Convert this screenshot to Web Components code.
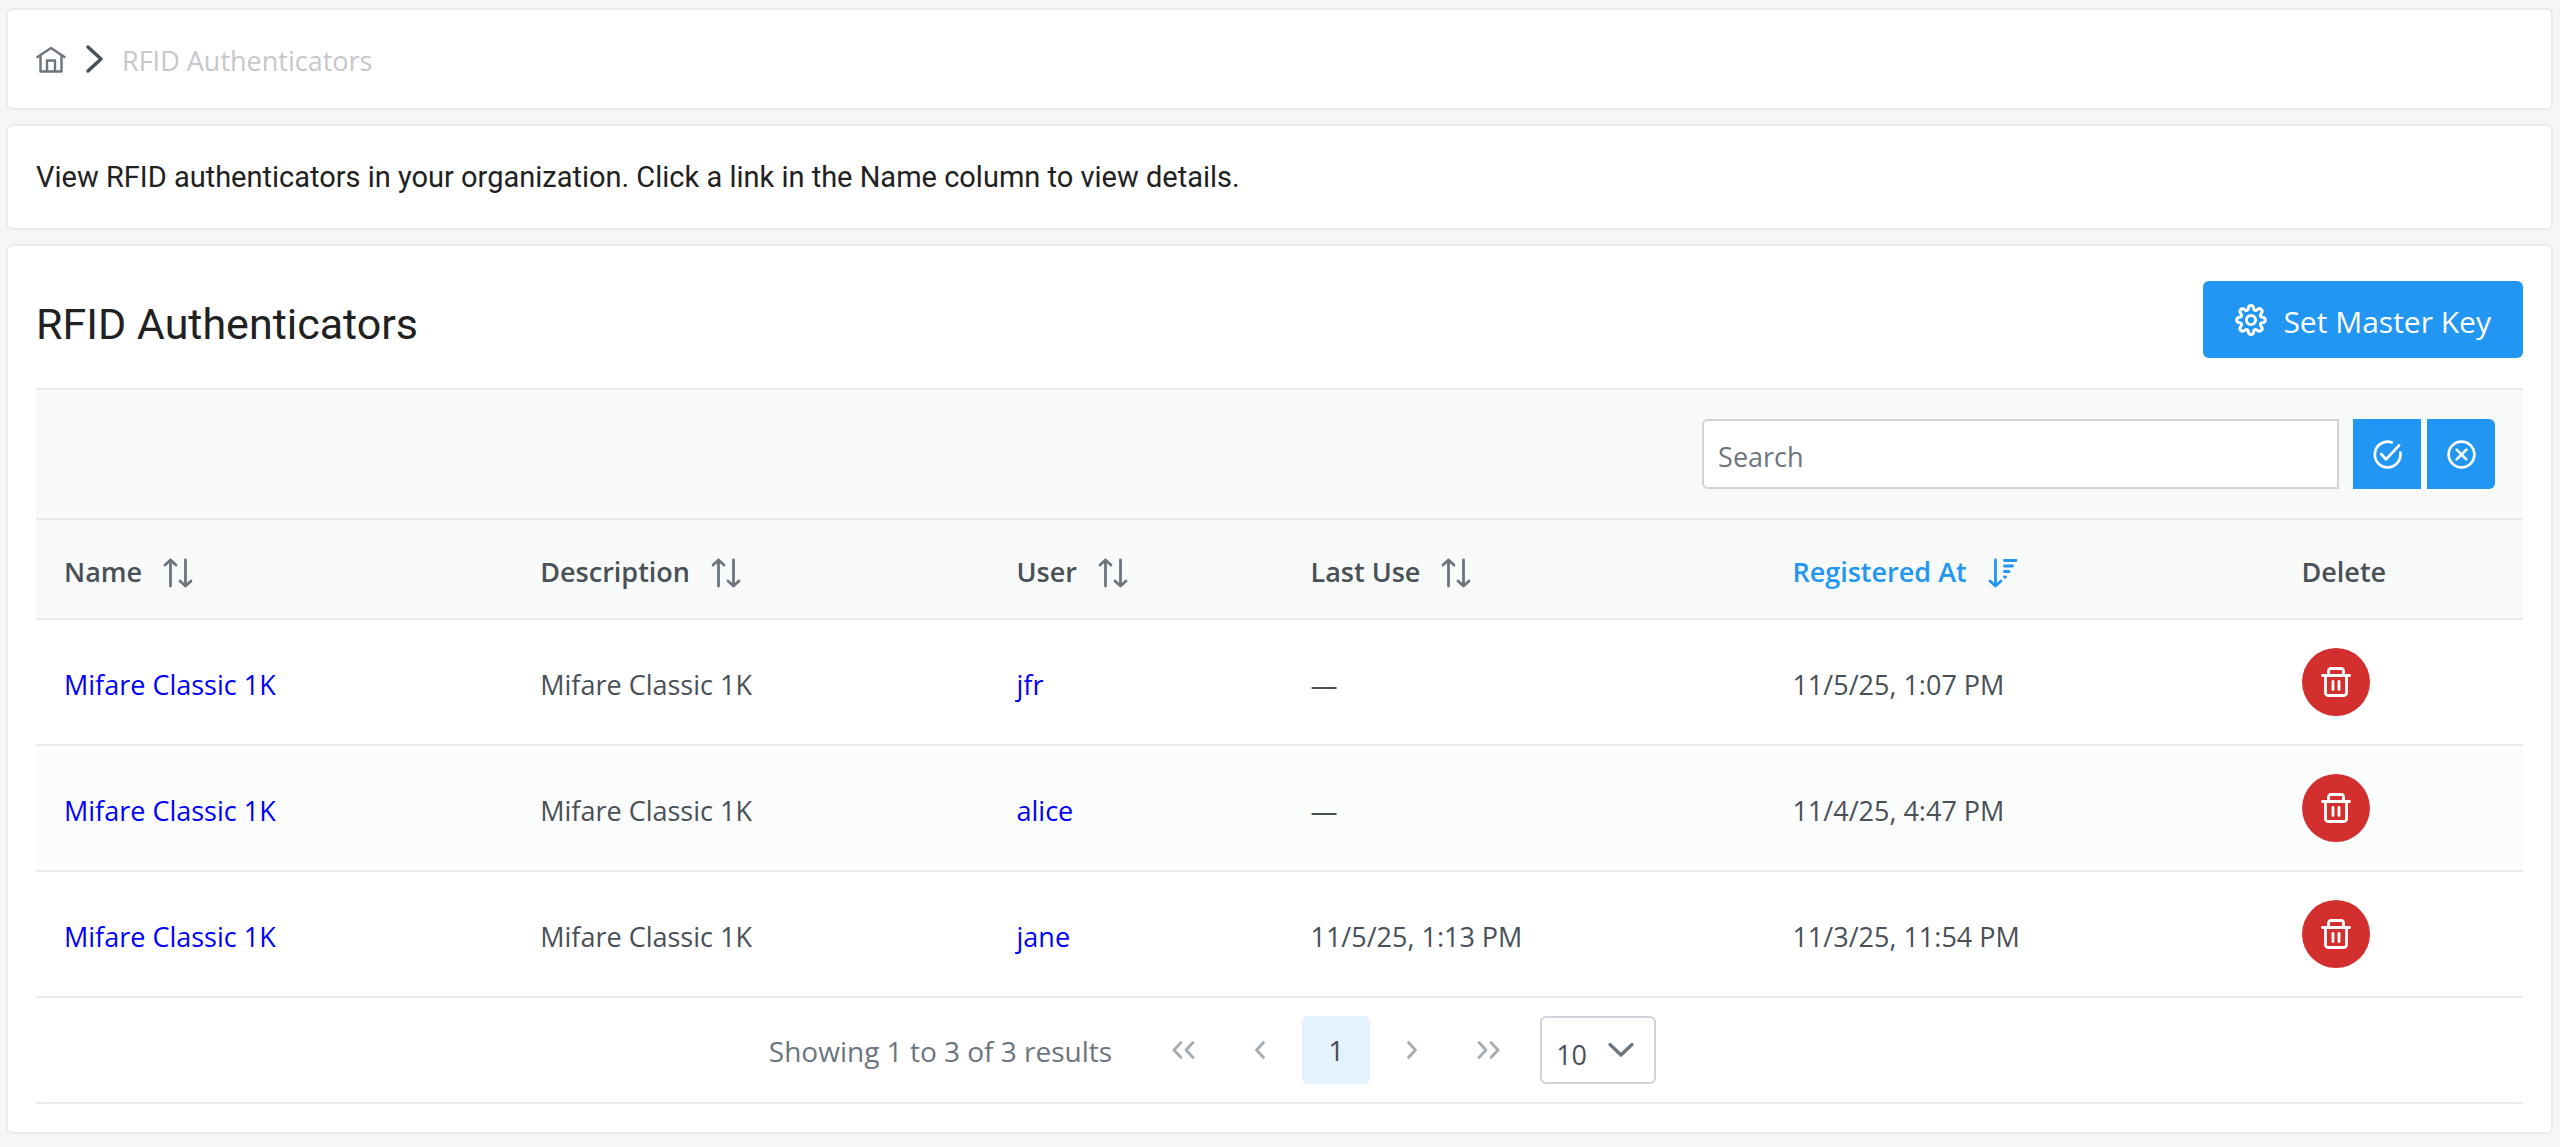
<!DOCTYPE html>
<html lang="en">
<head>
  <meta charset="utf-8">
  <meta name="viewport" content="width=device-width, initial-scale=1">
  <title>RFID Authenticators</title>
  <style>
    body {
      margin: 0;
      background-color: #f6f6f6;
      font-family: "Open Sans", "Noto Sans", sans-serif;
      font-size: 27px;
      color: #495057;
    }
  </style>
</head>
<body>
  <authenticators-page></authenticators-page>

  <script>
    const icons = {
      home: '<path stroke-width="2.4" d="M1.5 13 15 4l13.5 9M4.500 11.500V27.500h21V11.500M11 27V16.500h8V27"/>',
      chevron: '<path stroke-width="3.5" d="M9 3l13 12L9 27"/>',
      cog: '<circle cx="15" cy="15" r="4.3"/><path d="M12.6 3.2a2.5 2.5 0 0 1 4.8 0l.3 1.6a1.6 1.6 0 0 0 2.4 1l1.3-.9a2.5 2.5 0 0 1 3.5 3.5l-.9 1.4a1.6 1.6 0 0 0 1 2.4l1.6.4a2.5 2.5 0 0 1 0 4.8l-1.6.3a1.6 1.6 0 0 0-1 2.4l.9 1.4a2.5 2.5 0 0 1-3.5 3.5l-1.3-.9a1.6 1.6 0 0 0-2.4 1l-.3 1.6a2.5 2.5 0 0 1-4.8 0l-.3-1.6a1.6 1.6 0 0 0-2.4-1l-1.3.9a2.5 2.5 0 0 1-3.5-3.5l.9-1.4a1.6 1.6 0 0 0-1-2.4l-1.6-.3a2.5 2.5 0 0 1 0-4.8l1.6-.4a1.6 1.6 0 0 0 1-2.4l-.9-1.4a2.5 2.5 0 0 1 3.5-3.5l1.3.9a1.6 1.6 0 0 0 2.4-1z"/>',
      check: '<path d="M19.500 2.500A13.300 13.300 0 1 0 28.300 13M8.500 14.500l5 5.500L27 5.500"/>',
      times: '<circle cx="15" cy="15" r="13.300"/><path d="M10 10l10 10M20 10 10 20"/>',
      trash: '<path d="M1.500 8.500h27M4.500 8.500v17.500a2.500 2.500 0 0 0 2.500 2.500h16a2.500 2.500 0 0 0 2.500-2.500V8.500M7.500 8V4a2.500 2.500 0 0 1 2.500-2.500h10a2.500 2.500 0 0 1 2.500 2.500v4M12 14.500v8M18 14.500v8"/>',
      sort: '<path d="M7.500 28V2M2 7l5.500-5L13 7M22.500 2v26M17 23l5.500 5 5.500-5"/>',
      'sort-down': '<path d="M7.500 2v26M2 23l5.500 5 5.500-5M16.500 2.500h11.500M16.500 8h8M16.500 13.500h4.500M16.500 19h1"/>',
      first: '<path d="M12 7.500 5 15l7 7.500M24 7.500 17 15l7 7.500"/>',
      previous: '<path d="M18.500 7.500l-7 7.500 7 7.500"/>',
      next: '<path d="M11.500 7.500l7 7.500-7 7.500"/>',
      last: '<path d="M6 7.500l7 7.500-7 7.500M18 7.500l7 7.500-7 7.500"/>',
      down: '<path stroke-width="3.2" d="M4 9.500 15 20 26 9.500"/>'
    };

    class UiIcon extends HTMLElement {
      connectedCallback() {
        this.attachShadow({ mode: 'open' }).innerHTML = `
          <style>
            :host {
              display: inline-block;
              flex: none;
              width: var(--icon-size, 30px);
              height: var(--icon-size, 30px);
            }

            svg {
              display: block;
              width: 100%;
              height: 100%;
              overflow: visible;
            }
          </style>
          <svg viewBox="0 0 30 30" fill="none" stroke="currentColor" stroke-width="2.8"
            stroke-linecap="round" stroke-linejoin="round" aria-hidden="true">
            ${icons[this.getAttribute('name')]}
          </svg>
        `;
      }
    }

    customElements.define('ui-icon', UiIcon);

    class PanelCard extends HTMLElement {
      constructor() {
        super();
        this.attachShadow({ mode: 'open' }).innerHTML = `
          <style>
            :host {
              display: block;
              padding: 28px;
              background-color: #fff;
              border: 2px solid #eaeaea;
              border-radius: 6px;
            }
          </style>
          <slot></slot>
        `;
      }
    }

    customElements.define('panel-card', PanelCard);

    class BreadCrumb extends HTMLElement {
      constructor() {
        super();
        this.attachShadow({ mode: 'open' }).innerHTML = `
          <style>
            :host {
              display: block;
              line-height: 38px;
            }

            nav {
              display: flex;
              align-items: center;
              gap: 13px;
              color: #c6c7ca;
            }

            a {
              display: flex;
              color: #6c757d;
            }

            .separator {
              color: #495057;
            }

            .label {
              padding-top: 4px;
            }
          </style>
          <nav aria-label="Breadcrumb">
            <a href="#" aria-label="Home"><ui-icon name="home"></ui-icon></a>
            <ui-icon class="separator" name="chevron"></ui-icon>
            <span class="label"><slot></slot></span>
          </nav>
        `;
      }
    }

    customElements.define('bread-crumb', BreadCrumb);

    class ActionButton extends HTMLElement {
      connectedCallback() {
        this.attachShadow({ mode: 'open' }).innerHTML = `
          <style>
            :host {
              display: block;
            }

            button {
              display: flex;
              align-items: center;
              justify-content: center;
              gap: 16px;
              padding: 16px 32px;
              border: 0;
              border-radius: 6px;
              background-color: #2196f3;
              color: #fff;
              font: inherit;
              cursor: pointer;
            }

            .label {
              padding-top: 4px;
            }

            :host([kind]) button {
              width: 68px;
              height: 70px;
              padding: 0;
              border-radius: 0;
            }

            :host([kind]) .label {
              display: none;
            }

            :host([kind="last"]) button {
              border-radius: 0 6px 6px 0;
            }

            :host([kind="danger"]) button {
              height: 68px;
              border-radius: 50%;
              background-color: #d32f2f;
            }
          </style>
          <button type="button" ${this.title ? `aria-label="${this.title}"` : ''}>
            <ui-icon name="${this.getAttribute('icon')}"></ui-icon>
            <span class="label"><slot></slot></span>
          </button>
        `;
      }
    }

    customElements.define('action-button', ActionButton);

    class SearchBar extends HTMLElement {
      constructor() {
        super();
        this.attachShadow({ mode: 'open' }).innerHTML = `
          <style>
            :host {
              display: flex;
              justify-content: flex-end;
              gap: 6px;
              padding: 29px 28px;
              background-color: #f8faf9;
              border-top: 2px solid #e9ecef;
              border-bottom: 2px solid #e9ecef;
              --icon-size: 29px;
            }

            input {
              box-sizing: border-box;
              width: 26.2%;
              min-width: 240px;
              height: 70px;
              margin: 0 8px 0 0;
              padding: 4px 14px 0;
              border: 2px solid #ced4da;
              border-radius: 6px 0 0 6px;
              background-color: #fff;
              color: #495057;
              font: inherit;
            }

            input::placeholder {
              color: #6c757d;
            }
          </style>
          <input type="text" placeholder="Search" aria-label="Search">
          <action-button kind="square" icon="check" title="Apply search"></action-button>
          <action-button kind="last" icon="times" title="Clear search"></action-button>
        `;
      }
    }

    customElements.define('search-bar', SearchBar);

    class AuthenticatorTable extends HTMLElement {
      set rows(rows) {
        this._rows = rows;
        this.render();
      }

      render() {
        const root = this.shadowRoot || this.attachShadow({ mode: 'open' });

        root.innerHTML = `
          <style>
            :host {
              display: block;
            }

            table {
              width: 100%;
              table-layout: fixed;
              border-collapse: separate;
              border-spacing: 0;
            }

            .wide {
              width: 19.15%;
            }

            .user {
              width: 11.82%;
            }

            .last-use {
              width: 19.38%;
            }

            .registered {
              width: 20.47%;
            }

            th,
            td {
              box-sizing: border-box;
              padding: 30px 28px 26px;
              border-bottom: 2px solid #e9ecef;
              text-align: left;
            }

            th {
              height: 100px;
              background-color: #f8faf9;
              font-weight: 600;
              white-space: nowrap;
            }

            tbody tr:nth-child(even) td {
              background-color: #fbfcfc;
            }

            a {
              color: #0000ff;
              text-decoration: none;
            }

            button {
              display: inline-flex;
              align-items: center;
              gap: 21px;
              padding: 0;
              border: 0;
              background: none;
              color: inherit;
              font: inherit;
              cursor: pointer;
            }

            th ui-icon {
              margin-top: 4px;
              color: #6c757d;
            }

            [aria-sort] button,
            [aria-sort] ui-icon {
              color: #2196f3;
            }

            td:last-child {
              padding-top: 28px;
              padding-bottom: 28px;
            }
          </style>
          <table>
            <colgroup>
              <col class="wide">
              <col class="wide">
              <col class="user">
              <col class="last-use">
              <col class="registered">
              <col>
            </colgroup>
            <thead>
              <tr>
                <th><button type="button">Name <ui-icon name="sort"></ui-icon></button></th>
                <th><button type="button">Description <ui-icon name="sort"></ui-icon></button></th>
                <th><button type="button">User <ui-icon name="sort"></ui-icon></button></th>
                <th><button type="button">Last Use <ui-icon name="sort"></ui-icon></button></th>
                <th aria-sort="descending"><button type="button">Registered At <ui-icon name="sort-down"></ui-icon></button></th>
                <th>Delete</th>
              </tr>
            </thead>
            <tbody>
              ${this._rows.map((row) => `
                <tr>
                  <td><a href="#">${row.name}</a></td>
                  <td>${row.description}</td>
                  <td><a href="#">${row.user}</a></td>
                  <td>${row.lastUse}</td>
                  <td>${row.registeredAt}</td>
                  <td><action-button kind="danger" icon="trash" title="Delete"></action-button></td>
                </tr>
              `).join('')}
            </tbody>
          </table>
        `;
      }
    }

    customElements.define('authenticator-table', AuthenticatorTable);

    class TablePaginator extends HTMLElement {
      constructor() {
        super();
        this.attachShadow({ mode: 'open' }).innerHTML = `
          <style>
            :host {
              display: flex;
              align-items: center;
              justify-content: center;
              gap: 8px;
              padding: 18px 134px 18px 0;
              border-bottom: 2px solid #e9ecef;
              color: #6c757d;
              font-size: 28px;
            }

            .report {
              padding-top: 2px;
              margin-right: 30px;
            }

            button {
              display: flex;
              align-items: center;
              justify-content: center;
              width: 68px;
              height: 68px;
              padding: 0;
              border: 0;
              border-radius: 6px;
              background: none;
              color: #495057;
              font: inherit;
            }

            button:disabled {
              color: #a7acb1;
            }

            .current {
              background-color: #e3f2fd;
            }

            .page-size {
              display: grid;
              align-items: center;
              margin-left: 10px;
            }

            select,
            .page-size ui-icon {
              grid-area: 1 / 1;
            }

            select {
              appearance: none;
              box-sizing: border-box;
              width: 116px;
              height: 68px;
              padding: 8px 14px 0;
              border: 2px solid #ced4da;
              border-radius: 6px;
              background-color: #fff;
              color: #495057;
              font: inherit;
              font-size: 27px;
            }

            .page-size ui-icon {
              justify-self: end;
              margin-right: 20px;
              pointer-events: none;
            }
          </style>
          <span class="report">Showing 1 to 3 of 3 results</span>
          <button type="button" aria-label="First page" disabled><ui-icon name="first"></ui-icon></button>
          <button type="button" aria-label="Previous page" disabled><ui-icon name="previous"></ui-icon></button>
          <button type="button" class="current">1</button>
          <button type="button" aria-label="Next page" disabled><ui-icon name="next"></ui-icon></button>
          <button type="button" aria-label="Last page" disabled><ui-icon name="last"></ui-icon></button>
          <div class="page-size">
            <select aria-label="Rows per page">
              <option>10</option>
              <option>25</option>
              <option>50</option>
            </select>
            <ui-icon name="down"></ui-icon>
          </div>
        `;
      }
    }

    customElements.define('table-paginator', TablePaginator);

    class AuthenticatorsPage extends HTMLElement {
      connectedCallback() {
        this.attachShadow({ mode: 'open' }).innerHTML = `
          <style>
            :host {
              display: flex;
              flex-direction: column;
              gap: 14px;
              padding: 8px 7px 14px 6px;
            }

            p,
            h1 {
              margin: 0;
              color: #212121;
              font-family: Roboto, sans-serif;
              font-weight: 400;
            }

            p {
              font-size: 29px;
              line-height: 46px;
            }

            h1 {
              padding-top: 8px;
              font-size: 43px;
              line-height: 56px;
            }

            header {
              display: flex;
              align-items: center;
              justify-content: space-between;
              padding: 7px 0 30px;
            }

            header action-button {
              font-size: 30px;
              line-height: 41px;
              --icon-size: 32px;
            }
          </style>
          <panel-card>
            <bread-crumb>RFID Authenticators</bread-crumb>
          </panel-card>
          <panel-card>
            <p>View RFID authenticators in your organization. Click a link in the Name column to view details.</p>
          </panel-card>
          <panel-card>
            <header>
              <h1>RFID Authenticators</h1>
              <action-button icon="cog">Set Master Key</action-button>
            </header>
            <search-bar></search-bar>
            <authenticator-table></authenticator-table>
            <table-paginator></table-paginator>
          </panel-card>
        `;

        this.shadowRoot.querySelector('authenticator-table').rows = [
          { name: 'Mifare Classic 1K', description: 'Mifare Classic 1K', user: 'jfr', lastUse: '—', registeredAt: '11/5/25, 1:07 PM' },
          { name: 'Mifare Classic 1K', description: 'Mifare Classic 1K', user: 'alice', lastUse: '—', registeredAt: '11/4/25, 4:47 PM' },
          { name: 'Mifare Classic 1K', description: 'Mifare Classic 1K', user: 'jane', lastUse: '11/5/25, 1:13 PM', registeredAt: '11/3/25, 11:54 PM' }
        ];
      }
    }

    customElements.define('authenticators-page', AuthenticatorsPage);
  </script>
</body>
</html>
